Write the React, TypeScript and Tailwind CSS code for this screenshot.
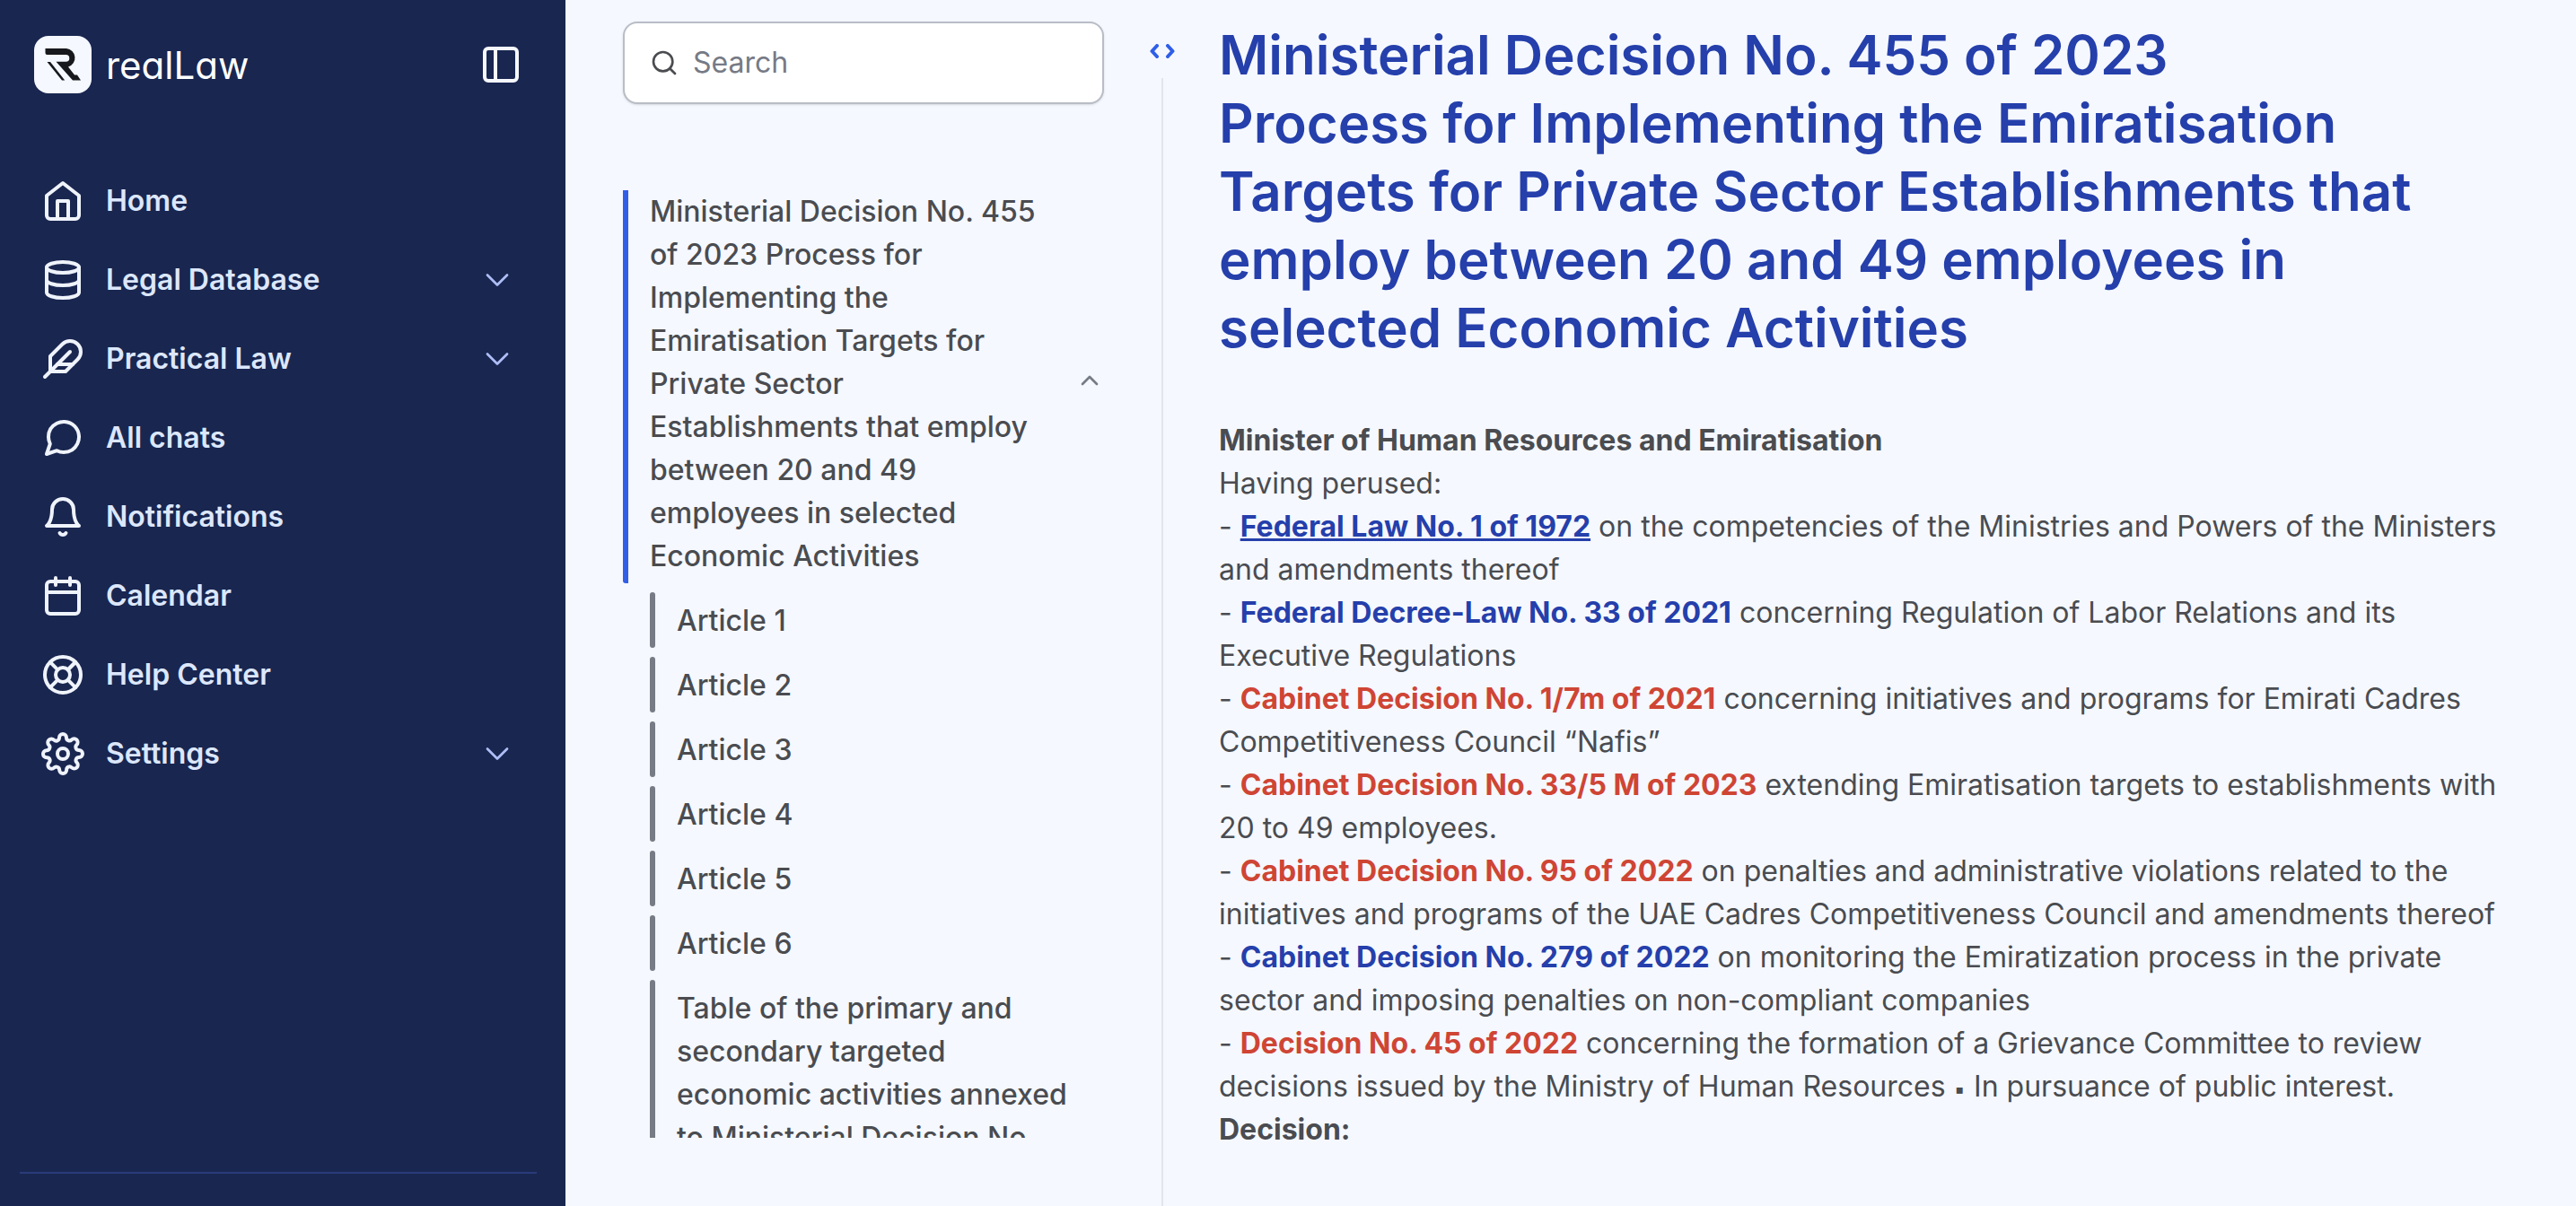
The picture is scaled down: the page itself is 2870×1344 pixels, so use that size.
import { useState } from 'react';
import type { ReactNode } from 'react';
import type { IconType } from 'react-icons';
import {
  FiBell,
  FiCalendar,
  FiChevronDown,
  FiChevronUp,
  FiDatabase,
  FiFeather,
  FiHome,
  FiLifeBuoy,
  FiMessageCircle,
  FiSearch,
  FiSettings,
  FiSidebar,
} from 'react-icons/fi';

interface NavItem {
  label: string;
  icon: IconType;
  expandable?: boolean;
}

const NAV_ITEMS: NavItem[] = [
  { label: 'Home', icon: FiHome },
  { label: 'Legal Database', icon: FiDatabase, expandable: true },
  { label: 'Practical Law', icon: FiFeather, expandable: true },
  { label: 'All chats', icon: FiMessageCircle },
  { label: 'Notifications', icon: FiBell },
  { label: 'Calendar', icon: FiCalendar },
  { label: 'Help Center', icon: FiLifeBuoy },
  { label: 'Settings', icon: FiSettings, expandable: true },
];

const DOC_TITLE =
  'Process for Implementing the Emiratisation Targets for Private Sector Establishments that employ between 20 and 49 employees in selected Economic Activities';

const TOC_ITEMS = [
  'Article 1',
  'Article 2',
  'Article 3',
  'Article 4',
  'Article 5',
  'Article 6',
  'Table of the primary and secondary targeted economic activities annexed to Ministerial Decision No. 455 of 2023',
];

function Logo() {
  return (
    <a href="#home" className="flex items-center gap-4">
      <svg viewBox="0 0 64 64" className="size-16" aria-hidden="true">
        <rect width="64" height="64" rx="16" fill="#f5f8ff" />
        <path
          d="M12.5 14H36a10.500 10.500 0 0 1 2 20.500L45 43.500h3l4 6h-9L24.500 28.700h11a3.800 3.800 0 0 0 0-7.600h-21a2 2 0 0 1-2-2z"
          fill="#16181c"
        />
        <path d="M14.500 29H18l16.200 20.500H31z" fill="#16181c" />
      </svg>
      <span className="pt-0.5 text-[42px] leading-[48px] text-white [font-feature-settings:'cv11']">realLaw</span>
    </a>
  );
}

function Sidebar() {
  return (
    <aside className="flex w-[630px] shrink-0 flex-col bg-[#192650]">
      <div className="flex items-center justify-between pt-10 pr-12 pl-[38px]">
        <Logo />
        <button type="button" aria-label="Toggle sidebar" className="text-[#f5f8ff]">
          <FiSidebar className="size-12" />
        </button>
      </div>

      <nav className="mt-[76px] flex flex-col">
        {NAV_ITEMS.map(({ label, icon: Icon, expandable }) => (
          <a
            key={label}
            href={`#${label.toLowerCase().replace(' ', '-')}`}
            className="flex h-[88px] items-center gap-6 pr-[54px] pl-[46px] text-[#dce7fc]"
          >
            <Icon className="size-12 text-[#eff3fb]" />
            <span className="flex-1 text-[32px] leading-[48px] font-semibold">{label}</span>
            {expandable && <FiChevronDown className="size-11 text-[#adbdf5]" strokeWidth={1.5} />}
          </a>
        ))}
      </nav>

      <div className="mt-auto mr-8 mb-9 ml-[22px] h-0.5 bg-[#293b7a]" />
    </aside>
  );
}

function TableOfContents() {
  const [open, setOpen] = useState(true);

  return (
    <section className="flex w-[536px] shrink-0 flex-col pt-6 pb-[76px]">
      <label className="flex h-[92px] shrink-0 items-center gap-4 rounded-2xl border-2 border-[#b9bdc6] bg-white px-7 shadow-sm">
        <FiSearch className="size-8 shrink-0 text-[#4a4c50]" />
        <input
          type="search"
          aria-label="Search"
          placeholder="Search"
          className="w-full min-w-0 bg-transparent text-[32px] leading-[48px] outline-none placeholder:text-[#767a85]"
        />
      </label>

      {/* scrollable outline */}
      <div className="mt-24 min-h-0 flex-1 overflow-hidden text-[32px] leading-[48px] font-medium">
        <div className="flex items-center justify-between rounded-b-[3px] border-l-[6px] border-[#325fe8] pb-1.5 pl-6">
          <a href="#top" className="w-[440px]">
            Ministerial Decision No. 455 of 2023 {DOC_TITLE}
          </a>
          <button
            type="button"
            aria-label="Toggle articles"
            onClick={() => setOpen(!open)}
            className="mb-2 text-[#767b85]"
          >
            <FiChevronUp className="size-8" />
          </button>
        </div>
        {open && (
          <ul className="mt-2.5 flex flex-col gap-2.5 pl-[30px]">
            {TOC_ITEMS.map((item) => (
              <li key={item} className="flex">
                <span className="w-1.5 shrink-0 rounded-[3px] bg-[#767b85]" />
                <a href="#article" className="w-[464px] pt-2 pb-1.5 pl-6">
                  {item}
                </a>
              </li>
            ))}
          </ul>
        )}
      </div>
    </section>
  );
}

function ResizeHandle() {
  return (
    <div className="mr-12 ml-[50px] flex w-[30px] shrink-0 flex-col items-center pt-[49px]">
      <button type="button" aria-label="Resize panel">
        <svg
          viewBox="0 0 28 16"
          className="block h-4 w-7"
          fill="none"
          stroke="#2f5fe8"
          strokeWidth="4"
          strokeLinecap="round"
          strokeLinejoin="round"
        >
          <path d="M8 2 2.500 8 8 14M20 2l5.500 6-5.500 6" />
        </svg>
      </button>
      <div className="mt-[22px] w-0.5 flex-1 bg-[#e3e5ec]" />
    </div>
  );
}

interface RefLinkProps {
  tone?: 'blue' | 'red';
  active?: boolean;
  children: ReactNode;
}

function RefLink({ tone = 'blue', active, children }: RefLinkProps) {
  const color = tone === 'blue' ? 'text-[#253fab]' : 'text-[#cf4534]';
  return (
    <a href="#reference" className={`font-bold ${color} ${active ? 'underline' : ''}`}>
      {children}
    </a>
  );
}

function Document() {
  return (
    <article className="min-w-0 flex-1 pt-[23px] pr-[72px]">
      <h1 className="text-[60px] leading-[76px] font-semibold text-[#253fab]">
        Ministerial Decision No. 455 of 2023
        <br />
        {DOC_TITLE}
      </h1>

      <div className="mt-16 text-[32px] leading-[48px]">
        <p className="font-bold">Minister of Human Resources and Emiratisation</p>
        <p>Having perused:</p>
        <p>
          - <RefLink active>Federal Law No. 1 of 1972</RefLink> on the competencies of the Ministries and Powers of the
          Ministers and amendments thereof
        </p>
        <p>
          - <RefLink>Federal Decree-Law No. 33 of 2021</RefLink> concerning Regulation of Labor Relations and its
          Executive Regulations
        </p>
        <p>
          - <RefLink tone="red">Cabinet Decision No. 1/7m of 2021</RefLink> concerning initiatives and programs for
          Emirati Cadres Competitiveness Council “Nafis”
        </p>
        <p>
          - <RefLink tone="red">Cabinet Decision No. 33/5 M of 2023</RefLink> extending Emiratisation targets to
          establishments with 20 to 49 employees.
        </p>
        <p>
          - <RefLink tone="red">Cabinet Decision No. 95 of 2022</RefLink> on penalties and administrative violations
          related to the initiatives and programs of the UAE Cadres Competitiveness Council and amendments thereof
        </p>
        <p>
          - <RefLink>Cabinet Decision No. 279 of 2022</RefLink> on monitoring the Emiratization process in the private
          sector and imposing penalties on non-compliant companies
        </p>
        <p>
          - <RefLink tone="red">Decision No. 45 of 2022</RefLink> concerning the formation of a Grievance Committee to
          review decisions issued by the Ministry of Human Resources <span className="text-2xl">▪</span> In pursuance of
          public interest.
        </p>
        <p className="font-bold">Decision:</p>
      </div>
    </article>
  );
}

export default function App() {
  return (
    <div className="flex h-screen overflow-hidden bg-[#f5f8ff] font-['Inter',sans-serif] text-[#4a4c50] [font-optical-sizing:none]">
      <Sidebar />
      <main className="flex min-w-0 flex-1 pl-16">
        <TableOfContents />
        <ResizeHandle />
        <Document />
      </main>
    </div>
  );
}
